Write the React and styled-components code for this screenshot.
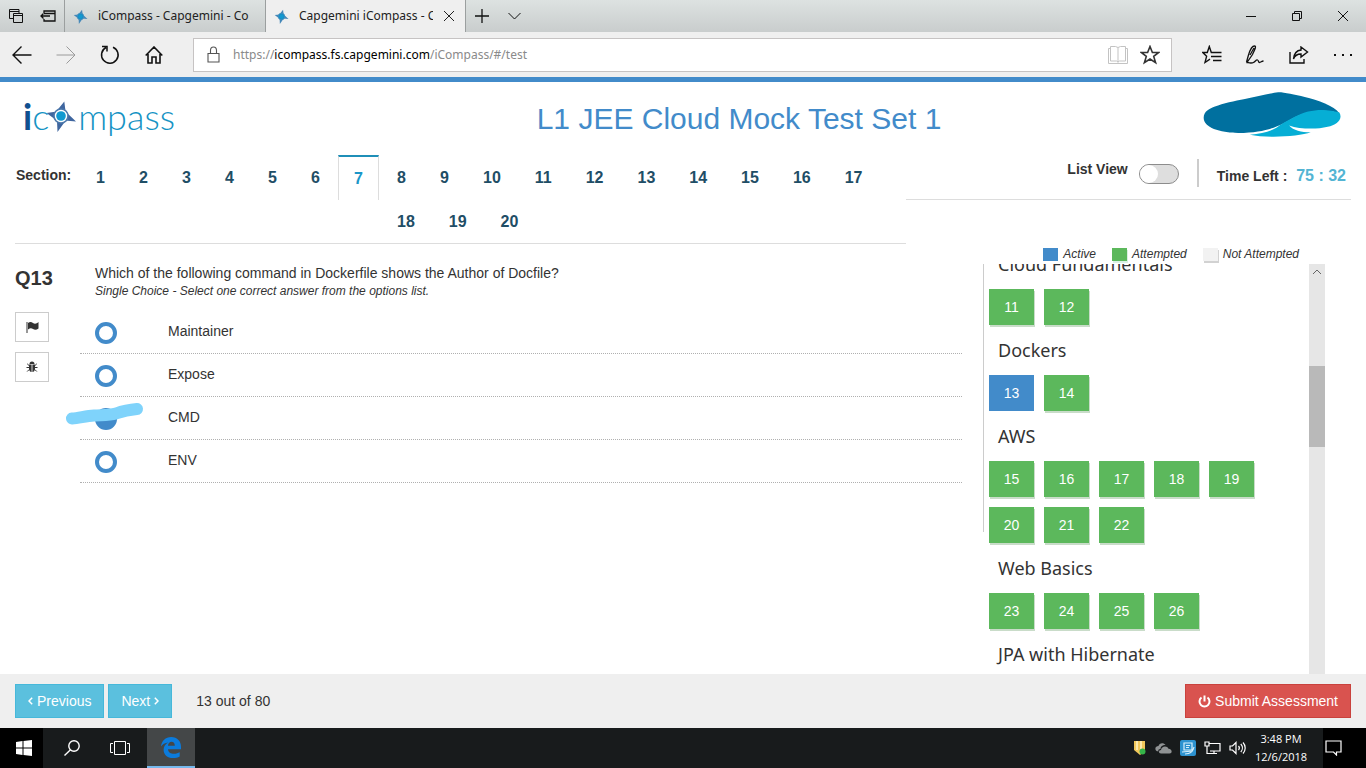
import React, { useLayoutEffect, useRef } from "react";
import styled, { createGlobalStyle } from "styled-components";

const GlobalStyle = createGlobalStyle`
  * { box-sizing: border-box; }
  body { margin: 0; background: #fff; color: #333; font: 14px/20px "Liberation Sans", Arial, sans-serif; }
  button, input { font: inherit; color: inherit; margin: 0; }
  button { cursor: pointer; }
  svg { display: block; flex: none; }
`;

const uiFont = `"Noto Sans", "Open Sans", sans-serif`;

const Window = styled.div`
  height: 100vh;
  display: flex;
  flex-direction: column;
`;

/* ---------- browser frame ---------- */
const TabStrip = styled.div`
  display: flex;
  height: 32px;
  flex: none;
  background: linear-gradient(#dde2e1, #c9cdcd);
  font: 12px/16px ${uiFont};
  color: #222;
`;
const StripButton = styled.button`
  display: flex;
  align-items: center;
  justify-content: center;
  width: ${(p) => p.$width}px;
  padding: 0;
  border: 0;
  background: none;
  color: #111;
`;
const BrowserTab = styled.div`
  display: flex;
  align-items: center;
  gap: 10px;
  width: 201px;
  padding: 0 10px 0 8px;
  border-left: 1px solid #9b9f9f;
  border-right: ${(p) => (p.$active ? "1px solid #9b9f9f" : "0")};
  background: ${(p) => (p.$active ? "#efefef" : "transparent")};
`;
const TabTitle = styled.span`
  flex: 1;
  overflow: hidden;
  white-space: nowrap;
`;
const Spacer = styled.div`
  flex: 1;
`;
const Toolbar = styled.div`
  display: flex;
  align-items: center;
  height: 45px;
  flex: none;
  background: #efefef;
`;
const AddressBar = styled.div`
  flex: 1;
  display: flex;
  align-items: center;
  height: 34px;
  margin: 0 20px 0 17px;
  padding: 0 11px 0 13px;
  border: 1px solid #c6c3c3;
  background: #fff;
`;
const Url = styled.div`
  flex: 1;
  padding-left: 12px;
  font: 12px/18px ${uiFont};
  color: #8a8a8a;
  white-space: nowrap;
  b { font-weight: 400; color: #000; }
`;

/* ---------- page header ---------- */
const PageHeader = styled.header`
  display: flex;
  align-items: center;
  height: 78px;
  flex: none;
  padding: 0 25px 0 23px;
  border-top: 5px solid #428bca;
`;
const Brand = styled.a`
  display: flex;
  align-items: center;
  width: 252px;
  margin-bottom: 6px;
  font: 300 36px/46px Lato, "Open Sans", sans-serif;
  color: #1593c4;
  text-decoration: none;
  b { font-weight: 700; color: #11508f; }
  svg { margin: 0 1px 0 -4px; }
`;
const Title = styled.h1`
  flex: 1;
  margin: 0;
  font-size: 30px;
  line-height: 34px;
  font-weight: 400;
  text-align: center;
  color: #428bca;
`;
const CompanyLogo = styled.svg`
  margin-bottom: 8px;
`;

const SectionBar = styled.div`
  display: flex;
  align-items: flex-start;
  flex: none;
  padding: 0 15px;
`;
const SectionNav = styled.nav`
  flex: 1;
  display: flex;
  border-bottom: 1px solid #ddd;
`;
const SectionLabel = styled.span`
  width: 65px;
  padding: 10px 0 0 1px;
  font-weight: 700;
`;
const SectionTabs = styled.ul`
  flex: 1;
  height: 88px;
  margin: 0;
  padding: 0;
  list-style: none;
`;
const SectionItem = styled.li`
  float: left;
  height: ${(p) => (p.$active ? 45 : 44)}px;
  margin-right: 2px;
`;
const SectionTab = styled.button`
  height: 100%;
  min-width: 41px;
  padding: 0 15px;
  border: solid ${(p) => (p.$active ? "#ddd" : "transparent")};
  border-width: 2px 1px 0;
  border-top-color: ${(p) => (p.$active ? "#1f8fb8" : "transparent")};
  background: ${(p) => (p.$active ? "#fff" : "none")};
  font-size: 16px;
  font-weight: 700;
  color: ${(p) => (p.$active ? "#1a96c8" : "#1f4e66")};
`;
const StatusBar = styled.div`
  width: 33.3%;
  display: flex;
  justify-content: flex-end;
  height: 45px;
  padding-right: 5px;
  border-bottom: 1px solid #ddd;
  font-weight: 700;
`;
const ListViewLabel = styled.label`
  display: flex;
  padding: 4px 18px 0 0;
  gap: 11px;
`;
const Toggle = styled.input`
  appearance: none;
  width: 40px;
  height: 20px;
  margin-top: 5px;
  border: 1px solid #8c8c8c;
  border-radius: 10px;
  background: #dedede;
  &::before {
    content: "";
    display: block;
    width: 18px;
    height: 18px;
    border-radius: 50%;
    background: #fff;
  }
`;
const TimeLeft = styled.div`
  height: 28px;
  margin-top: 4px;
  padding: 7px 0 0 18px;
  border-left: 2px solid #ccc;
  white-space: pre;
  span { margin-left: 5px; font-size: 16px; color: #53b4d3; }
`;

/* ---------- question ---------- */
const Main = styled.main`
  flex: 1;
  min-height: 0;
  display: flex;
  padding: 0 41px 0 15px;
`;
const QuestionTools = styled.div`
  width: 65px;
  padding-top: 20px;
`;
const QuestionNumber = styled.h2`
  margin: 0 0 20px;
  font-size: 20px;
  line-height: 28px;
`;
const ToolButton = styled.button`
  display: flex;
  align-items: center;
  justify-content: center;
  width: 34px;
  height: 30px;
  margin-bottom: 10px;
  padding: 0;
  border: 1px solid #ccc;
  background: #fff;
`;
const Question = styled.section`
  flex: 1;
  padding-top: 19px;
`;
const Prompt = styled.p`
  margin: 0;
  padding-left: 15px;
`;
const Hint = styled.p`
  margin: 0 0 12px;
  padding-left: 15px;
  font-size: 12px;
  line-height: 16px;
  font-style: italic;
`;
const Option = styled.label`
  position: relative;
  display: flex;
  align-items: center;
  gap: 51px;
  height: 43px;
  padding: 0 0 2px 15px;
  border-bottom: 1px dotted #b0b0b0;
`;
const Radio = styled.input`
  appearance: none;
  width: 22px;
  height: 22px;
  margin-top: 4px;
  border: 4px solid #428bca;
  border-radius: 50%;
  background: #fff;
  &:checked { background: #428bca; }
`;
const Marker = styled.svg`
  position: absolute;
  left: -16px;
  top: 4px;
`;

/* ---------- question palette ---------- */
const Aside = styled.aside`
  width: 342px;
  margin-left: 21px;
  display: flex;
  flex-direction: column;
`;
const Legend = styled.div`
  display: flex;
  align-items: center;
  justify-content: flex-end;
  gap: 16px;
  height: 20px;
  flex: none;
  padding-right: 26px;
  font-size: 12px;
  line-height: 20px;
  font-style: italic;
`;
const LegendItem = styled.span`
  display: flex;
  align-items: center;
  gap: 5px;
  &::before {
    content: "";
    width: 15px;
    height: 13px;
    background: ${(p) => p.$color};
    box-shadow: ${(p) => p.$shadow || "none"};
  }
`;
const Palette = styled.div`
  flex: 1;
  min-height: 0;
  display: flex;
`;
const PaletteScroll = styled.div`
  flex: 1;
  overflow: hidden;
  padding-left: 6px;
  background: linear-gradient(#ccc, #ccc) no-repeat 0 0 / 1px 268px;
`;
const GroupTitle = styled.h3`
  height: 40px;
  margin: 0;
  padding: 2px 0 0 9px;
  font: 400 18px/26px "Noto Sans", sans-serif;
`;
const Tiles = styled.div`
  display: flex;
  flex-wrap: wrap;
  gap: 10px;
  padding: 0 30px 10px 0;
`;
const Tile = styled.button`
  width: 45px;
  height: 36px;
  padding: 0;
  border: 0;
  background: ${(p) => (p.$active ? "#428bca" : "#5cb85c")};
  box-shadow: ${(p) => (p.$active ? "none" : "1px 2px 0 #c9dcc9")};
  color: #fff;
`;
const ScrollTrack = styled.div`
  width: 16px;
  display: flex;
  flex-direction: column;
  align-items: center;
  background: #e6e6e6;
  svg { margin: 5px 0; }
`;
const ScrollThumb = styled.div`
  width: 100%;
  height: 81px;
  margin-top: 86px;
  background: #b9b9b9;
`;

/* ---------- footer and taskbar ---------- */
const Footer = styled.footer`
  display: flex;
  align-items: center;
  gap: 4px;
  height: 54px;
  flex: none;
  padding: 0 15px;
  background: #efefef;
`;
const ActionButton = styled.button`
  display: flex;
  align-items: center;
  gap: 4px;
  height: 34px;
  padding: 0 12px;
  border: 1px solid ${(p) => (p.$danger ? "#c9423d" : "#46b8da")};
  background: ${(p) => (p.$danger ? "#d9534f" : "#5bc0de")};
  color: #fff;
`;
const Progress = styled.span`
  margin-left: 20px;
`;
const Taskbar = styled.div`
  display: flex;
  height: 40px;
  flex: none;
  background: #181b1c;
  color: #fff;
`;
const TaskButton = styled.button`
  display: flex;
  align-items: center;
  justify-content: center;
  width: 48px;
  padding: 0;
  border: 0;
  border-bottom: ${(p) => (p.$active ? "2px solid #76b9ed" : "0")};
  background: ${(p) => (p.$active ? "#444748" : "none")};
  color: #fff;
`;
const StartButton = styled(TaskButton)`
  width: 43px;
  margin-right: 5px;
  padding-left: 5px;
  background: #000;
`;
const EdgeButton = styled(TaskButton)`
  margin-left: 3px;
`;
const Tray = styled.div`
  display: flex;
  align-items: center;
  gap: 8px;
  padding-right: 9px;
`;
const Clock = styled.div`
  width: 52px;
  margin-right: 16px;
  padding-top: 2px;
  font: 11px/18px "Open Sans", "Noto Sans", sans-serif;
  text-align: center;
  white-space: nowrap;
`;
const NoticeButton = styled(TaskButton)`
  width: 43px;
  padding-right: 24px;
  justify-content: flex-end;
  background: #000;
`;

/* ---------- icons ---------- */
const Line = ({ w = 16, h = w, s = 1, children, ...rest }) => (
  <svg width={w} height={h} viewBox={`0 0 ${w} ${h}`} fill="none" stroke="currentColor" strokeWidth={s} aria-hidden="true" {...rest}>
    {children}
  </svg>
);
const Compass = ({ size, light }) => (
  <svg width={size} height={size} viewBox="0 0 32 32" aria-hidden="true">
    <path d="M12 10.500L19.300 1.500 20.500 11zM21 12L31 21.500 20 20.500zM20 21.500L12.500 32 12 21zM11 20L1.500 13 12 11.500z" fill={light ? "#4587b8" : "#3f669f"} />
    <circle cx="16" cy="16" r="7" fill={light ? "#1c87bd" : "#fff"} stroke={light ? "#4b93c0" : "#4c78ab"} strokeWidth="1.6" />
    <circle cx="16" cy="16" r="4.800" fill="#1199d0" />
  </svg>
);

const GROUPS = [
  { name: "Cloud Fundamentals", items: [11, 12] },
  { name: "Dockers", items: [13, 14] },
  { name: "AWS", items: [15, 16, 17, 18, 19, 20, 21, 22] },
  { name: "Web Basics", items: [23, 24, 25, 26] },
  { name: "JPA with Hibernate", items: [] },
];
const OPTIONS = ["Maintainer", "Expose", "CMD", "ENV"];
const SECTIONS = Array.from({ length: 20 }, (_, i) => i + 1);

function BrowserChrome() {
  return (
    <>
      <TabStrip>
        <StripButton $width={32} aria-label="Tabs set aside">
          <Line w={14}><path d="M4 9.500H.5v-9h9.500V4M.5 2.500H10M4.500 4.500h9v9h-9zM4.500 6.500h9" /></Line>
        </StripButton>
        <StripButton $width={32} aria-label="Set tabs aside">
          <Line w={16} h={12} s={1.3}><path d="M4 3V1h11v10H4V9M4 3.500h11M10 6H1M3.500 3.500L1 6l2.500 2.500" /></Line>
        </StripButton>
        <BrowserTab>
          <Compass size={15} light />
          <TabTitle>iCompass - Capgemini - Co</TabTitle>
        </BrowserTab>
        <BrowserTab $active>
          <Compass size={15} light />
          <TabTitle>Capgemini iCompass - C</TabTitle>
          <Line w={12}><path d="M1 1l10 10M11 1L1 11" /></Line>
        </BrowserTab>
        <StripButton $width={32} aria-label="New tab">
          <Line w={14} s={1.3}><path d="M7 0v14M0 7h14" /></Line>
        </StripButton>
        <StripButton $width={32} aria-label="Tab previews">
          <Line w={13} h={8}><path d="M.5 1l6 6 6-6" /></Line>
        </StripButton>
        <Spacer />
        <StripButton $width={46} aria-label="Minimize">
          <Line w={10}><path d="M0 5.500h10" /></Line>
        </StripButton>
        <StripButton $width={46} aria-label="Restore">
          <Line w={10}><path d="M.5 2.500h7v7h-7zM2.500 2.500v-2h7v7h-2" /></Line>
        </StripButton>
        <StripButton $width={46} aria-label="Close">
          <Line w={10}><path d="M0 0l10 10M10 0L0 10" /></Line>
        </StripButton>
      </TabStrip>
      <Toolbar>
        <StripButton $width={44} aria-label="Back">
          <Line w={20} h={18} s={1.4}><path d="M19.500 9H1M9.500.5L1 9l8.500 8.500" /></Line>
        </StripButton>
        <StripButton $width={44} aria-label="Forward">
          <Line w={20} h={18} color="#9a9a9a"><path d="M.5 9H19M10.500.5L19 9l-8.500 8.500" /></Line>
        </StripButton>
        <StripButton $width={44} aria-label="Refresh">
          <Line w={20} s={1.500}><path d="M13 2.200A8.300 8.300 0 1 1 6 2.500M2 1.500h5v5" /></Line>
        </StripButton>
        <StripButton $width={44} aria-label="Home">
          <Line w={18} h={18} s={1.6}><path d="M.7 9.500L9 1l8.300 8.500M3 8v9h4v-6h4v6h4V8" /></Line>
        </StripButton>
        <AddressBar>
          <Line w={14} h={17} s={1.1} color="#555"><path d="M1 7.500h11v8.500H1zM3.500 7.500V4.500a3 3.500 0 0 1 6 0v3" /></Line>
          <Url role="textbox" aria-label="Address" tabIndex={0}>
            https://<b>icompass.fs.capgemini.com</b>/iCompass/#/test
          </Url>
          <Line w={20} h={18} style={{ color: "#c3c3c3", marginRight: 12 }}>
            <path d="M.5 2.500h2V.5h5l2.500 1 2.500-1h5v2h2v15H.5zM2.500 2v13h6l1.500 1 1.500-1h6V2M10 1.500v15" />
          </Line>
          <Line w={20} s={1.6}><path d="M10 1.500l2.400 6h6.300l-5 3.900 1.900 6.300L10 14l-5.600 3.700 1.900-6.300-5-3.900h6.300z" /></Line>
        </AddressBar>
        <StripButton $width={40} aria-label="Hub">
          <Line w={20} h={20} s={1.4}>
            <path d="M11 7.500L9.300 7.500 7.300 1.500l-2 6H.8l3.800 3.800L3 17.500l5-3.300M11 7.500h8.500M9 11.500h10.500M11 15.500h8.500" />
          </Line>
        </StripButton>
        <StripButton $width={46} aria-label="Add notes">
          <Line w={20} h={20} s={1.3}>
            <path d="M1.500 17L3.500 10C5 5 7 1 9.500 1S9 6 7.500 9.500L2 17.500c3 .5 4.500 1 6.500 0s2.500-3 4-2.500.5 2.500 2 2.500 2-1.500 4-1.500M5 10L9 3" />
          </Line>
        </StripButton>
        <StripButton $width={42} aria-label="Share">
          <Line w={20} h={18} s={1.4}>
            <path d="M1 6v11h14v-4M12 1l6.500 5L12 11V8c-3 0-6 1-7.500 5C5 8 7 4.500 12 4z" />
          </Line>
        </StripButton>
        <StripButton $width={46} aria-label="More">
          <Line w={18} h={4} s={2}><path d="M0 2h2M8 2h2M16 2h2" /></Line>
        </StripButton>
      </Toolbar>
    </>
  );
}

function QuestionPalette() {
  const scroller = useRef(null);
  useLayoutEffect(() => {
    scroller.current.scrollTop = 15;
  }, []);
  return (
    <Aside>
      <Legend>
        <LegendItem $color="#428bca">Active</LegendItem>
        <LegendItem $color="#5cb85c" $shadow="1px 2px 0 #d9f0e2">Attempted</LegendItem>
        <LegendItem $color="#f2f2f2" $shadow="1px 2px 0 #d2d2d2">Not Attempted</LegendItem>
      </Legend>
      <Palette>
        <PaletteScroll ref={scroller}>
          {GROUPS.map((group) => (
            <section key={group.name}>
              <GroupTitle>{group.name}</GroupTitle>
              {group.items.length > 0 && (
                <Tiles>
                  {group.items.map((n) => (
                    <Tile key={n} $active={n === 13}>{n}</Tile>
                  ))}
                </Tiles>
              )}
            </section>
          ))}
        </PaletteScroll>
        <ScrollTrack>
          <Line w={10} h={6} color="#666"><path d="M1 5l4-4 4 4" /></Line>
          <ScrollThumb />
        </ScrollTrack>
      </Palette>
    </Aside>
  );
}

function WindowsTaskbar() {
  return (
    <Taskbar>
      <StartButton aria-label="Start">
        <svg width="16" height="16" viewBox="0 0 16 16" fill="#fff" aria-hidden="true">
          <path d="M0 2l6.500-1v6.500H0zM7.500.9L16 0v7.500H7.500zM0 8.500h6.500V15L0 14zM7.500 8.500H16V16l-8.500-1z" />
        </svg>
      </StartButton>
      <TaskButton aria-label="Search">
        <Line w={16} s={1.4}><circle cx="10" cy="6" r="5.200" /><path d="M6.500 9.800L.5 15.500" /></Line>
      </TaskButton>
      <TaskButton aria-label="Task view">
        <Line w={20} h={14}><path d="M4.500.5h11v13h-11zM3 2.500H.5v9H3M17 2.500h2.500v9H17" /></Line>
      </TaskButton>
      <EdgeButton $active aria-label="Microsoft Edge">
        <svg width="20" height="21" viewBox="0 0 20 21" aria-hidden="true">
          <path fill="#0b7bdc" d="M0 9.500C.6 4 4.500 0 10.200 0 16.500 0 20 4.500 20 9.800v2.400H7c.2 3 2.700 4.600 6 4.600 2.300 0 4.200-.6 5.700-1.500v4.200c-1.800 1-4 1.500-6.600 1.500-6 0-9.500-3.500-9.500-8.300 0-3.200 1.700-5.800 4.700-7.200C4 5.800 1.500 7.300 0 9.500zM7 8.700h6.800c0-2.500-1.200-3.900-3.300-3.900S7.300 6.500 7 8.700z" />
        </svg>
      </EdgeButton>
      <Spacer />
      <Tray>
        <svg width="14" height="16" viewBox="0 0 14 16" aria-hidden="true">
          <path d="M1 1h11v10l-5 4-6-5z" fill="#f1c75b" />
          <path d="M4 1v9M8 1v9" stroke="#fff3c6" strokeWidth="1.500" />
          <circle cx="9.500" cy="11.500" r="3" fill="#35b549" />
        </svg>
        <svg width="17" height="12" viewBox="0 0 17 12" fill="#909394" aria-hidden="true">
          <path d="M1.500 9C-1 6.500 1 4 3.500 4 4 1 8.500 0 10.500 3 7 3 5.500 5 5.500 7 3.500 7 3 8.500 3.500 9.500zM6 11.500C3 11.500 3.500 8 6 8c.3-4 6-5 7.500-1.300 4 .3 4 4.800 1 4.800z" />
        </svg>
        <svg width="16" height="16" viewBox="0 0 16 16" aria-hidden="true">
          <rect width="16" height="16" rx="2" fill="#2d92cf" />
          <path d="M4 3h8v7H4zM2 12l11-1M6 5.500h4M6 7.500h3M5 14c4 0 8-2 9-7" fill="none" stroke="#d7effb" strokeWidth="1.200" />
        </svg>
        <Line w={17} h={14} s={1.2}><path d="M5 2.500h11v7.500H6M1 1h4v4H1zM3 5v7.500h10M10 10v3" /></Line>
        <Line w={17} h={14} s={1.2}><path d="M1 5h2.500L7 1.500v11L3.500 9H1zM9.500 5a3 3 0 0 1 0 4M11.800 3a6 6 0 0 1 0 8M14 1.500a8 8 0 0 1 0 11" /></Line>
      </Tray>
      <Clock>3:48 PM<br />12/6/2018</Clock>
      <NoticeButton aria-label="Notifications">
        <Line w={17} h={16} s={1.2}><path d="M1 1h15v11h-4.500v3L8.500 12H1z" /></Line>
      </NoticeButton>
    </Taskbar>
  );
}

export default function App() {
  return (
    <Window>
      <GlobalStyle />
      <BrowserChrome />
      <PageHeader>
        <Brand href="#" aria-label="icompass">
          <b>i</b>c<Compass size={32} />mpass
        </Brand>
        <Title>L1 JEE Cloud Mock Test Set 1</Title>
        <CompanyLogo width="138" height="45" viewBox="0 0 415 136" preserveAspectRatio="none" role="img" aria-label="Capgemini">
          <path fill="#00709f" d="M226 1C240 0 275 8 306 15 345 24 395 42 410 64 370 50 318 56 276 76 235 98 205 122 106 124 50 123 2 108 2 78 2 58 20 50 36 44 60 34 95 27 126 21 160 14 200 4 226 1z" />
          <path fill="#06aed5" d="M410 62C422 82 402 100 375 105 340 114 290 112 259 101 272 116 295 121 324 122 290 135 190 140 141 129 175 126 200 121 222 107 245 91 262 82 276 75 320 50 370 50 410 62z" />
        </CompanyLogo>
      </PageHeader>
      <SectionBar>
        <SectionNav>
          <SectionLabel>Section:</SectionLabel>
          <SectionTabs>
            {SECTIONS.map((n) => (
              <SectionItem key={n} $active={n === 7}>
                <SectionTab $active={n === 7}>{n}</SectionTab>
              </SectionItem>
            ))}
          </SectionTabs>
        </SectionNav>
        <StatusBar>
          <ListViewLabel>
            List View
            <Toggle type="checkbox" />
          </ListViewLabel>
          <TimeLeft>Time Left : <span>75 : 32</span></TimeLeft>
        </StatusBar>
      </SectionBar>
      <Main>
        <QuestionTools>
          <QuestionNumber>Q13</QuestionNumber>
          <ToolButton aria-label="Flag question">
            <svg width="13" height="12" viewBox="0 0 13 12" fill="#333" aria-hidden="true">
              <path d="M.5 1h1v11h-1zM2 2c2-1.500 3.500-1 5 0s3.500 1 5.500-1v6.500c-2 1.500-4 1.500-5.500.5S4 7 2 8.500z" />
            </svg>
          </ToolButton>
          <ToolButton aria-label="Report a problem">
            <svg width="12" height="12" viewBox="0 0 12 12" aria-hidden="true">
              <path d="M3.500 3a2.500 2.500 0 0 1 5 0zM3 3.500h2.600V11C4 11 3 9.500 3 8zM6.400 3.500H9V8c0 1.500-1 3-2.600 3z" fill="#333" />
              <path d="M3 4.500L1.200 2.800M9 4.500l1.800-1.700M3 6.500H.5M9 6.500h2.500M3.200 8.500l-2 2M8.800 8.500l2 2" stroke="#333" fill="none" />
            </svg>
          </ToolButton>
        </QuestionTools>
        <Question>
          <Prompt>Which of the following command in Dockerfile shows the Author of Docfile?</Prompt>
          <Hint>Single Choice - Select one correct answer from the options list.</Hint>
          {OPTIONS.map((text) => (
            <Option key={text}>
              <Radio type="radio" name="answer" defaultChecked={text === "CMD"} />
              {text}
              {text === "CMD" && (
                <Marker width="80" height="24" viewBox="0 0 80 24" aria-hidden="true">
                  <path d="M8 17.500C15 17 22 15 30 14.500 40 14 45 14.500 52 12.500 60 9.500 66 8.500 73 8" fill="none" stroke="#7fd3fb" strokeWidth="12" strokeLinecap="round" />
                </Marker>
              )}
            </Option>
          ))}
        </Question>
        <QuestionPalette />
      </Main>
      <Footer>
        <ActionButton>
          <Line w={5} h={8} s={1.500}><path d="M4.200.8L1 4l3.200 3.200" /></Line>
          Previous
        </ActionButton>
        <ActionButton>
          Next
          <Line w={5} h={8} s={1.500}><path d="M.8.8L4 4 .8 7.200" /></Line>
        </ActionButton>
        <Progress>13 out of 80</Progress>
        <Spacer />
        <ActionButton $danger>
          <Line w={13} h={13} s={2}><path d="M6.500.5v6M3.500 2.500a5 5 0 1 0 6 0" /></Line>
          Submit Assessment
        </ActionButton>
      </Footer>
      <WindowsTaskbar />
    </Window>
  );
}
